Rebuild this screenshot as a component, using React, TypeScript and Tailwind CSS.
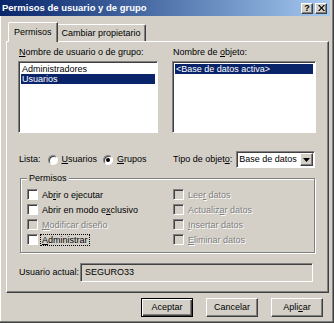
import type { ReactNode } from "react";

const raised =
  "border border-t-white border-l-white border-r-[#404040] border-b-[#404040] shadow-[inset_-1px_-1px_0_#808080]";
const sunken =
  "border border-t-[#808080] border-l-[#808080] border-r-white border-b-white shadow-[inset_1px_1px_0_#404040]";
const disabledText = "text-[#808080] [text-shadow:1px_1px_0_#ffffff]";

// label with one underlined mnemonic letter
function Mn({ text, at }: { text: string; at: number }) {
  return (
    <>
      {text.slice(0, at)}
      <span className="underline underline-offset-[1px]">{text[at]}</span>
      {text.slice(at + 1)}
    </>
  );
}

function Check({
  text,
  at,
  disabled,
  focus,
}: {
  text: string;
  at: number;
  disabled?: boolean;
  focus?: boolean;
}) {
  return (
    <div className="flex items-center h-[15px]">
      <div className={`w-[11px] h-[11px] ${sunken} ${disabled ? "bg-[#d4d0c8]" : "bg-white"}`} />
      <span
        className={`ml-[3px] px-[1px] leading-[10px] ${disabled ? disabledText : ""} ${
          focus ? "outline outline-1 outline-dotted outline-black" : ""
        }`}
      >
        <Mn text={text} at={at} />
      </span>
    </div>
  );
}

function Radio({ checked, children }: { checked?: boolean; children: ReactNode }) {
  return (
    <div className="flex items-center">
      <div
        className={`w-[10px] h-[10px] rounded-full bg-white border border-t-[#808080] border-l-[#808080] border-r-white border-b-white flex items-center justify-center shadow-[inset_1px_1px_0_#404040]`}
      >
        {checked && <div className="w-[4px] h-[4px] rounded-full bg-black" />}
      </div>
      <span className="ml-[4px]">{children}</span>
    </div>
  );
}

function Button({ children, isDefault }: { children: ReactNode; isDefault?: boolean }) {
  return (
    <div
      className={`w-[52px] h-[19px] flex items-center justify-center ${
        isDefault
          ? "border border-black shadow-[inset_1px_1px_0_#ffffff,inset_-1px_-1px_0_#404040,inset_-2px_-2px_0_#808080]"
          : raised
      }`}
    >
      {children}
    </div>
  );
}

export default function App() {
  return (
    <div className="w-[334px] h-[323px] bg-[#d4d0c8] flex flex-col font-['Liberation_Sans',Arial,sans-serif] text-[9px] leading-[11px] text-black border-r border-b border-[#404040] shadow-[inset_-1px_-1px_0_#808080,inset_1px_0_0_#ffffff] overflow-hidden select-none">
      {/* title bar */}
      <div className="h-[16px] mr-[3px] flex items-center bg-linear-to-r from-[#0a246a] to-[#a6caf0] pl-[2px] pr-[3px]">
        <span className="flex-1 text-white font-bold text-[9.5px] leading-[12px]">
          Permisos de usuario y de grupo
        </span>
        <div className={`w-[12px] h-[11px] bg-[#d4d0c8] ${raised} flex items-center justify-center font-bold text-[9px] leading-[9px]`}>
          ?
        </div>
        <div className={`ml-[2px] w-[12px] h-[11px] bg-[#d4d0c8] ${raised} flex items-center justify-center`}>
          <svg width="7" height="6" viewBox="0 0 7 6">
            <path d="M0 0h1.5L3.5 2.2 5.5 0H7L4.3 3 7 6H5.5L3.5 3.8 1.5 6H0L2.7 3z" fill="#000" />
          </svg>
        </div>
      </div>

      {/* tabs */}
      <div className="flex items-end h-[20px] mt-[5px] pl-[8px] relative z-10">
        <div className="h-[20px] -mb-px px-[5px] pt-[4px] bg-[#d4d0c8] border-l border-t border-white border-r border-r-[#404040] shadow-[inset_-1px_0_0_#808080] rounded-tl-[2px]">
          Permisos
        </div>
        <div className="h-[17px] px-[4px] pt-[3px] border-t border-white border-r border-r-[#404040] shadow-[inset_-1px_0_0_#808080] rounded-tr-[2px]">
          Cambiar propietario
        </div>
      </div>

      {/* tab panel */}
      <div className={`ml-[6px] w-[323px] h-[252px] ${raised} pl-[11px] pt-[5px] flex flex-col`}>
        <div className="flex gap-[14px]">
          <div className="w-[140px] flex flex-col">
            <span className="ml-[1px]">
              <Mn text="Nombre de usuario o de grupo:" at={0} />
            </span>
            <div className={`mt-[3px] h-[72px] bg-white ${sunken} p-[2px] flex flex-col`}>
              <div className="h-[10px] leading-[10px] px-[1px]">Administradores</div>
              <div className="h-[10px] leading-[10px] px-[1px] bg-[#0a246a] text-white">Usuarios</div>
            </div>
          </div>
          <div className="w-[144px] flex flex-col">
            <span className="ml-[1px]">
              <Mn text="Nombre de objeto:" at={10} />
            </span>
            <div className={`mt-[3px] h-[72px] bg-white ${sunken} p-[2px] flex flex-col`}>
              <div className="h-[10px] leading-[10px] px-[1px] bg-[#0a246a] text-white">
                &lt;Base de datos activa&gt;
              </div>
            </div>
          </div>
        </div>

        <div className="mt-[18px] h-[17px] flex items-center">
          <div className="w-[154px] flex items-center">
            <span className="ml-[1px] mr-[7px]">Lista:</span>
            <Radio>
              <Mn text="Usuarios" at={0} />
            </Radio>
            <div className="w-[6px]" />
            <Radio checked>
              <Mn text="Grupos" at={0} />
            </Radio>
          </div>
          <span className="ml-[1px]">
            <Mn text="Tipo de objeto:" at={13} />
          </span>
          <div className={`ml-[4px] w-[79px] h-[17px] bg-white ${sunken} flex items-center`}>
            <span className="flex-1 pl-[2px]">Base de datos</span>
            <div className={`w-[13px] h-[13px] mr-[1px] bg-[#d4d0c8] ${raised} flex items-center justify-center`}>
              <svg width="7" height="4" viewBox="0 0 7 4">
                <path d="M0 0h7L3.5 4z" fill="#000" />
              </svg>
            </div>
          </div>
        </div>

        {/* Permisos group */}
        <div className="mt-[10px] ml-[2px] w-[295px] h-[75px] relative border border-[#808080] shadow-[1px_1px_0_#ffffff,inset_1px_1px_0_#ffffff] pl-[6px] pt-[8px] flex gap-[0px]">
          <span className="absolute left-[6px] -top-[6px] px-[2px] bg-[#d4d0c8]">Permisos</span>
          <div className="w-[146px] flex flex-col">
            <Check text="Abrir o ejecutar" at={2} />
            <Check text="Abrir en modo exclusivo" at={15} />
            <Check text="Modificar diseño" at={0} disabled />
            <Check text="Administrar" at={0} focus />
          </div>
          <div className="flex flex-col">
            <Check text="Leer datos" at={3} disabled />
            <Check text="Actualizar datos" at={8} disabled />
            <Check text="Insertar datos" at={0} disabled />
            <Check text="Eliminar datos" at={0} disabled />
          </div>
        </div>

        <div className="mt-[10px] h-[19px] flex items-center">
          <span className="ml-[1px] w-[61px]">Usuario actual:</span>
          <div className={`w-[233px] h-[19px] ${sunken} flex items-center pl-[4px]`}>SEGURO33</div>
        </div>
      </div>

      {/* buttons */}
      <div className="mt-[5px] flex justify-end gap-[13px] pr-[10px]">
        <Button isDefault>Aceptar</Button>
        <Button>Cancelar</Button>
        <Button>
          <Mn text="Aplicar" at={4} />
        </Button>
      </div>
    </div>
  );
}
